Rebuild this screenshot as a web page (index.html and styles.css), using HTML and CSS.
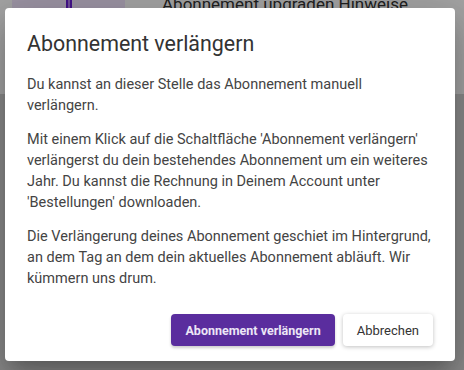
FILE: index.html
```
<!DOCTYPE html>
<html lang="de">
<head>
    <meta charset="UTF-8">
    <meta name="viewport" content="width=device-width, initial-scale=1.0">
    <title>Abonnement verlängern</title>
    <link rel="stylesheet" href="styles.css">
</head>
<body>
    <div class="page">
        <div class="page-top">
            <div class="thumb">
                <div class="thumb-line"></div>
            </div>
            <div class="page-title">Abonnement upgraden Hinweise</div>
        </div>
        <div class="page-rest"></div>
    </div>

    <div class="backdrop"></div>

    <div class="dialog">
        <h2 class="dialog-title">Abonnement verlängern</h2>
        <div class="dialog-body">
            <p>Du kannst an dieser Stelle das Abonnement manuell verlängern.</p>
            <p>Mit einem Klick auf die Schaltfläche 'Abonnement verlängern' verlängerst du dein bestehendes Abonnement um ein weiteres Jahr. Du kannst die Rechnung in Deinem Account unter 'Bestellungen' downloaden.</p>
            <p>Die Verlängerung deines Abonnement geschiet im Hintergrund, an dem Tag an dem dein aktuelles Abonnement abläuft. Wir kümmern uns drum.</p>
        </div>
        <div class="dialog-actions">
            <button class="btn btn-primary">Abonnement verlängern</button>
            <button class="btn btn-secondary">Abbrechen</button>
        </div>
    </div>
</body>
</html>
```

FILE: styles.css
```
body {
    margin: 0;
    font-family: 'Roboto', sans-serif;
    color: #333;
    background-color: #fff;
    height: 370px;
    overflow: hidden;
}
.page {
    display: flex;
    flex-direction: column;
    height: 100%;
}
.page-top {
    display: flex;
    gap: 37px;
    height: 94px;
    padding-left: 12px;
    background-color: #fff;
}
.thumb {
    width: 113px;
    height: 100%;
    background-color: #f2e6ff;
    display: flex;
    justify-content: center;
}
.thumb-line {
    width: 2px;
    margin-right: -1px;
    border-left: 2px solid #6a1fd6;
    border-right: 2px solid #6a1fd6;
    background-color: #b07cf0;
}
.page-title {
    font-size: 17px;
    margin-top: -6px;
    color: #333;
}
.page-rest {
    flex: 1;
    background-color: #d8d8d8;
}
.backdrop {
    position: absolute;
    inset: 0;
    background-color: rgba(0, 0, 0, 0.36);
}
.dialog {
    position: absolute;
    top: 8px;
    left: 5px;
    width: 450px;
    height: 353px;
    box-sizing: border-box;
    padding: 22px 22px 15px;
    background-color: #fff;
    border-radius: 4px;
    box-shadow: 0 11px 15px -7px rgba(0, 0, 0, 0.2), 0 24px 38px 3px rgba(0, 0, 0, 0.14), 0 9px 46px 8px rgba(0, 0, 0, 0.12);
    display: flex;
    flex-direction: column;
}
.dialog-title {
    margin: 0 0 16px;
    font-size: 21.4px;
    font-weight: 400;
    line-height: 28px;
    color: #333;
}
.dialog-body {
    flex: 1;
    font-size: 14.5px;
    line-height: 21.3px;
    color: #444;
}
.dialog-body p {
    margin: 0 0 12px;
}
.dialog-actions {
    display: flex;
    justify-content: flex-end;
    gap: 8px;
}
.btn {
    height: 32px;
    padding: 0 14px;
    border: none;
    border-radius: 4px;
    font-family: 'Roboto', sans-serif;
    font-size: 13px;
    cursor: pointer;
}
.btn-primary {
    background-color: #5a2d9e;
    color: #ece6f6;
    font-weight: 700;
    font-size: 12.5px;
    box-shadow: 0 2px 3px rgba(0, 0, 0, 0.2);
}
.btn-secondary {
    background-color: #fff;
    color: #333;
    box-shadow: 0 1px 4px rgba(0, 0, 0, 0.25);
}
```
